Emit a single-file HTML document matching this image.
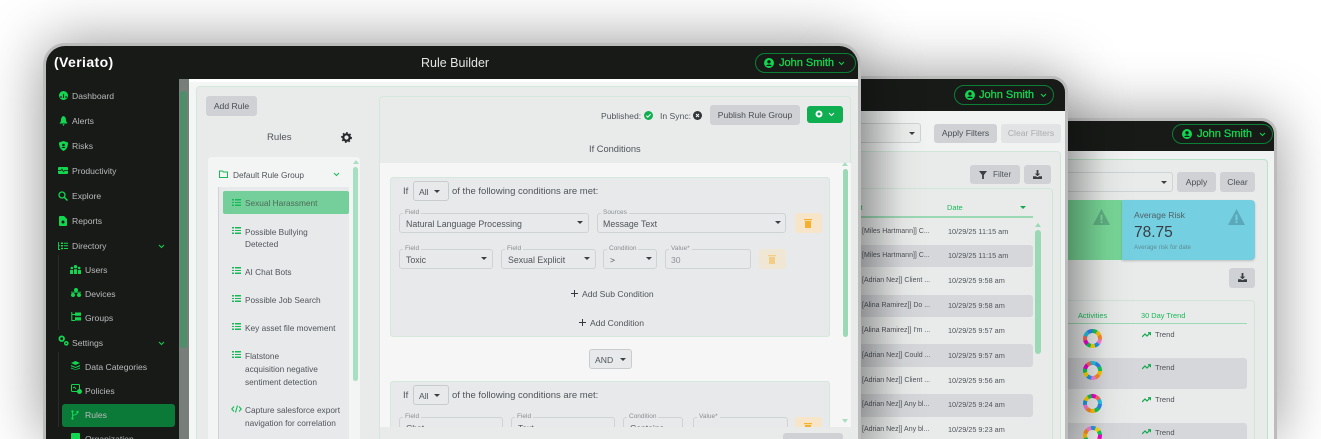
<!DOCTYPE html>
<html><head><meta charset="utf-8"><style>
html,body{margin:0;padding:0;background:#fff;overflow:hidden}
#s{position:relative;width:1321px;height:439px;overflow:hidden;background:#fff;font-family:"Liberation Sans",sans-serif;color:#50545a}
#s div,#s svg{position:absolute}
.t{white-space:nowrap;font-size:8.6px;line-height:12px}
.rl{font-size:8.3px}
.dev{background:#181a18;border:3px solid #bcbcbc;border-bottom:0;box-shadow:0 0 60px rgba(0,0,0,.42);overflow:hidden;box-sizing:border-box;border-radius:16px 16px 0 0}
.pill{border:1px solid #0b7f36;border-radius:11px;height:20px;box-sizing:border-box}
.js{white-space:nowrap;color:#12d650;font-size:11px;line-height:14px;-webkit-text-stroke:.3px #12d650}
.btn{background:#cfd1d5;border-radius:3px;color:#4a4d53;font-size:8.6px;text-align:center;white-space:nowrap}
.sel{border:1px solid #cfd3d3;border-radius:3px;box-sizing:border-box}
.lab{font-size:6.5px;color:#8a8e92;background:#e8e9ea;padding:0 2px;line-height:7px;white-space:nowrap}
.car{width:0;height:0;border-left:3.5px solid transparent;border-right:3.5px solid transparent;border-top:3.5px solid #3b3e42}
.nav{color:#b9bcbb;font-size:8.6px;white-space:nowrap;line-height:12px}
.li{width:9px;height:7px;background:repeating-linear-gradient(#17b956 0 1.3px,transparent 1.3px 2.85px);-webkit-mask-image:linear-gradient(90deg,#000 2px,transparent 2px 3px,#000 3px)}
.r{background:#d6d7da;border-radius:3px}
.don{width:19px;height:19px;border-radius:50%;background:conic-gradient(#14c95a 0 9%,#ffc107 9% 18%,#ff8a2a 18% 27%,#ff80d8 27% 36%,#1e9bf0 36% 45%,#ffd800 45% 54%,#14c95a 54% 62%,#f000d0 62% 71%,#ff6b5a 71% 80%,#27c4e8 80% 90%,#2f86ef 90% 100%)}
.don::after{content:"";position:absolute;left:4px;top:4px;width:11px;height:11px;border-radius:50%;background:#eceded}
</style></head><body><div id="s">

<!-- back device -->
<div class="dev" style="left:1040px;top:118px;width:237px;height:321px">
 <div style="left:0;top:30px;width:232px;height:288px;background:#f1f2f2"></div>
 <div style="left:0;top:38px;width:225px;height:280px;background:#e9ebea;border:1px solid #b9e3c9;border-bottom:0;border-radius:4px 4px 0 0;box-sizing:border-box"></div>
 <div class="pill" style="left:129px;top:3px;width:101px"></div>
 <div class="js" style="left:154px;top:6px">John Smith</div>
 <svg style="left:139px;top:8px" width="10" height="10" viewBox="0 0 10 10"><circle cx="5" cy="5" r="5" fill="#12d650"/><circle cx="5" cy="3.800" r="1.700" fill="#181a18"/><path d="M2 8c1-2 5-2 6 0" fill="#181a18"/></svg>
 <svg style="left:216px;top:11px" width="7" height="5" viewBox="0 0 7 5"><path d="M1 1l2.500 2.500L6 1" fill="none" stroke="#12d650"/></svg>
 <div class="sel" style="left:0;top:51px;width:130px;height:20px"></div>
 <div class="car" style="left:118px;top:60px"></div>
 <div class="btn" style="left:134px;top:51px;width:39px;height:20px;line-height:20px">Apply</div>
 <div class="btn" style="left:177px;top:51px;width:35px;height:20px;line-height:20px">Clear</div>
 <div style="left:0;top:79px;width:79px;height:60px;background:#78d697"></div>
 <div style="left:79px;top:79px;width:133px;height:60px;background:#74d0e0;border-radius:0 4px 4px 0;box-shadow:0 1px 2px rgba(0,0,0,.2)"></div>
 <svg style="left:49px;top:87px" width="19" height="18" viewBox="0 0 20 19"><path d="M10 1L19 18H1Z" fill="#5fae82"/><path d="M9 7h2v6H9zM9 14h2v2H9z" fill="#78d697"/></svg>
 <svg style="left:184px;top:87px" width="19" height="18" viewBox="0 0 20 19"><path d="M10 1L19 18H1Z" fill="#5aa9bb"/><path d="M9 7h2v6H9zM9 14h2v2H9z" fill="#74d0e0"/></svg>
 <div class="t" style="left:91px;top:88px;font-size:8.6px;color:#4f6068">Average Risk</div>
 <div class="t" style="left:91px;top:102px;font-size:15.500px;line-height:20px;color:#383c44">78.75</div>
 <div class="t" style="left:91px;top:123px;font-size:6.200px;line-height:8px;color:#5f8a96">Average risk for date</div>
 <div class="btn" style="left:186px;top:147px;width:26px;height:20px"></div>
 <svg style="left:195px;top:152px" width="9" height="9" viewBox="0 0 10 10"><path d="M4 0h2v4h2L5 7 2 4h2zM0 7h3l2 1 2-1h3v3H0z" fill="#3b3e42"/></svg>
 <div style="left:0;top:179px;width:212px;height:139px;background:#e9ebea;border:1px solid #d2e3d9;border-bottom:0;border-radius:4px 4px 0 0;box-sizing:border-box"></div>
 <div style="left:0;top:202px;width:204px;height:1px;background:#9bd8b4"></div>
 <div class="t" style="left:35px;top:189px;color:#17b956;font-size:7.400px">Activities</div>
 <div class="t" style="left:98px;top:189px;color:#17b956;font-size:7.400px">30 Day Trend</div>
 <div class="r" style="left:0;top:237px;width:204px;height:31px"></div>
 <div class="r" style="left:0;top:302px;width:204px;height:16px;border-radius:3px 3px 0 0"></div>
 <div class="don" style="left:40px;top:208px"></div>
 <div class="don" style="left:40px;top:240px;transform:rotate(60deg)"></div>
 <div class="don" style="left:40px;top:273px;transform:rotate(130deg)"></div>
 <div style="left:40px;top:305px;width:19px;height:13px;overflow:hidden"><div class="don" style="left:0;top:0;transform:rotate(220deg)"></div></div>
 <svg style="left:99px;top:211px" width="9" height="6" viewBox="0 0 9 6"><path d="M0 5l3-3 2 2 3-3M6 .7h2.500v2.500" fill="none" stroke="#12a84d" stroke-width="1.200"/></svg><div class="t" style="left:112px;top:208px;font-size:7.600px">Trend</div>
 <svg style="left:99px;top:243px" width="9" height="6" viewBox="0 0 9 6"><path d="M0 5l3-3 2 2 3-3M6 .7h2.500v2.500" fill="none" stroke="#12a84d" stroke-width="1.200"/></svg><div class="t" style="left:112px;top:241px;font-size:7.600px">Trend</div>
 <svg style="left:99px;top:276px" width="9" height="6" viewBox="0 0 9 6"><path d="M0 5l3-3 2 2 3-3M6 .7h2.500v2.500" fill="none" stroke="#12a84d" stroke-width="1.200"/></svg><div class="t" style="left:112px;top:273px;font-size:7.600px">Trend</div>
 <svg style="left:99px;top:308px" width="9" height="6" viewBox="0 0 9 6"><path d="M0 5l3-3 2 2 3-3M6 .7h2.500v2.500" fill="none" stroke="#12a84d" stroke-width="1.200"/></svg><div class="t" style="left:112px;top:306px;font-size:7.600px">Trend</div>
 <div style="left:25px;top:30px;width:38px;height:288px;background:linear-gradient(90deg,rgba(0,0,0,.13),rgba(0,0,0,0))"></div>
</div>

<!-- middle device -->
<div class="dev" style="left:840px;top:76px;width:228px;height:363px">
 <div style="left:0;top:32px;width:222px;height:328px;background:#f1f2f2"></div>
 <div class="pill" style="left:111px;top:6px;width:100px"></div>
 <svg style="left:122px;top:11px" width="10" height="10" viewBox="0 0 10 10"><circle cx="5" cy="5" r="5" fill="#12d650"/><circle cx="5" cy="3.800" r="1.700" fill="#181a18"/><path d="M2 8c1-2 5-2 6 0" fill="#181a18"/></svg>
 <div class="js" style="left:136px;top:9px">John Smith</div>
 <svg style="left:197px;top:14px" width="7" height="5" viewBox="0 0 7 5"><path d="M1 1l2.500 2.500L6 1" fill="none" stroke="#12d650"/></svg>
 <div class="sel" style="left:0;top:44px;width:78px;height:20px;background:#eceeed"></div>
 <div class="car" style="left:66px;top:53px;"></div>
 <div class="btn" style="left:91px;top:45px;width:63px;height:19px;line-height:19px">Apply Filters</div>
 <div class="btn" style="left:158px;top:45px;width:60px;height:19px;line-height:19px;background:#e2e3e5;color:#a9abae">Clear Filters</div>
 <div style="left:0;top:72px;width:218px;height:288px;background:#e9ebea;border:1px solid #cfe6d9;border-bottom:0;border-radius:4px 4px 0 0;box-sizing:border-box"></div>
 <div class="btn" style="left:127px;top:86px;width:50px;height:19px"></div>
 <svg style="left:136px;top:92px" width="8" height="8" viewBox="0 0 9 9"><path d="M0 0h9L5.500 4.500V9h-2V4.500Z" fill="#3b3e42"/></svg>
 <div class="t" style="left:150px;top:90px;font-size:8.200px">Filter</div>
 <div class="btn" style="left:181px;top:86px;width:27px;height:19px"></div>
 <svg style="left:190px;top:91px" width="9" height="9" viewBox="0 0 10 10"><path d="M4 0h2v4h2L5 7 2 4h2zM0 7h3l2 1 2-1h3v3H0z" fill="#3b3e42"/></svg>
 <div style="left:0;top:109px;width:210px;height:251px;background:#e9ebea;border:1px solid #cfe6d9;border-bottom:0;border-radius:4px 4px 0 0;box-sizing:border-box"></div>
 <div class="t" style="left:6px;top:123px;color:#17b956;font-size:7.400px">Text</div>
 <div class="t" style="left:104px;top:123px;color:#17b956;font-size:7.400px">Date</div>
 <div style="left:177px;top:127px;width:0;height:0;border-left:3px solid transparent;border-right:3px solid transparent;border-top:3px solid #12a84d"></div>
 <div style="left:0;top:137px;width:190px;height:2px;background:#9bd8b4"></div>
 <div style="left:192px;top:151px;width:6px;height:124px;background:#9bd8b4;border-radius:3px"></div>
 <div style="left:192px;top:144px;width:0;height:0;border-left:3px solid transparent;border-right:3px solid transparent;border-bottom:4px solid #9bd8b4"></div>
 <div class="r" style="left:0;top:166px;width:190px;height:22px"></div>
 <div class="r" style="left:0;top:216px;width:190px;height:22px"></div>
 <div class="r" style="left:0;top:265px;width:190px;height:23px"></div>
 <div class="r" style="left:0;top:315px;width:190px;height:23px"></div>
 <div class="t" style="left:19px;top:147px;font-size:7px">[Miles Hartmann]] C...</div><div class="t" style="left:105px;top:147px;font-size:7.300px">10/29/25 11:15 am</div>
 <div class="t" style="left:19px;top:171px;font-size:7px">[Miles Hartmann]] C...</div><div class="t" style="left:105px;top:171px;font-size:7.300px">10/29/25 11:15 am</div>
 <div class="t" style="left:19px;top:196px;font-size:7px">[Adrian Nez]] Client ...</div><div class="t" style="left:105px;top:196px;font-size:7.300px">10/29/25 9:58 am</div>
 <div class="t" style="left:19px;top:221px;font-size:7px">[Alina Ramirez]] Do ...</div><div class="t" style="left:105px;top:221px;font-size:7.300px">10/29/25 9:58 am</div>
 <div class="t" style="left:19px;top:246px;font-size:7px">[Alina Ramirez]] I'm ...</div><div class="t" style="left:105px;top:246px;font-size:7.300px">10/29/25 9:57 am</div>
 <div class="t" style="left:19px;top:271px;font-size:7px">[Adrian Nez]] Could ...</div><div class="t" style="left:105px;top:271px;font-size:7.300px">10/29/25 9:57 am</div>
 <div class="t" style="left:19px;top:296px;font-size:7px">[Adrian Nez]] Client ...</div><div class="t" style="left:105px;top:296px;font-size:7.300px">10/29/25 9:56 am</div>
 <div class="t" style="left:19px;top:320px;font-size:7px">[Adrian Nez]] Any bl...</div><div class="t" style="left:105px;top:320px;font-size:7.300px">10/29/25 9:24 am</div>
 <div class="t" style="left:19px;top:345px;font-size:7px">[Adrian Nez]] Any bl...</div><div class="t" style="left:105px;top:345px;font-size:7.300px">10/29/25 9:23 am</div>
 <div style="left:18px;top:32px;width:42px;height:328px;background:linear-gradient(90deg,rgba(0,0,0,.15),rgba(0,0,0,0))"></div>
</div>

<!-- front device -->
<div class="dev" style="left:43px;top:43px;width:818px;height:396px;border-radius:22px 22px 0 0">
 <div class="t" style="left:8px;top:7px;color:#fff;font-size:14px;line-height:18px;font-weight:bold;letter-spacing:.4px">(Veriato)</div>
 <div class="t" style="left:375px;top:10px;color:#e4e6e5;font-size:12.500px;line-height:15px">Rule Builder</div>
 <div class="pill" style="left:709px;top:7px;width:101px"></div>
 <svg style="left:718px;top:12px" width="10" height="10" viewBox="0 0 10 10"><circle cx="5" cy="5" r="5" fill="#12d650"/><circle cx="5" cy="3.800" r="1.700" fill="#181a18"/><path d="M2 8c1-2 5-2 6 0" fill="#181a18"/></svg>
 <div class="js" style="left:733px;top:10px">John Smith</div>
 <svg style="left:792px;top:15px" width="7" height="5" viewBox="0 0 7 5"><path d="M1 1l2.500 2.500L6 1" fill="none" stroke="#12d650"/></svg>

 <!-- sidebar nav -->
 <svg style="left:13px;top:45px" width="9" height="9" viewBox="0 0 9 9"><circle cx="4.500" cy="4.500" r="4.500" fill="#12d650"/><path d="M2 7V5M4.500 7V3M7 7V5" stroke="#181a18" stroke-width="1.100"/></svg><div class="nav" style="left:26px;top:44px">Dashboard</div>
 <svg style="left:13px;top:70px" width="9" height="10" viewBox="0 0 9 10"><path d="M4.500 0C2 1 2 3 2 5L.5 7.500h8L7 5C7 3 7 1 4.500 0zM3.300 8.300h2.400L4.500 10z" fill="#12d650"/></svg><div class="nav" style="left:26px;top:69px">Alerts</div>
 <svg style="left:13px;top:95px" width="9" height="10" viewBox="0 0 9 10"><path d="M4.500 0L9 1.500C9 6 7.500 8.500 4.500 10 1.500 8.500 0 6 0 1.500Z" fill="#12d650"/><circle cx="4.500" cy="4" r="1.300" fill="#181a18"/><path d="M2.500 7c.7-1.300 3.300-1.300 4 0" fill="#181a18"/></svg><div class="nav" style="left:26px;top:94px">Risks</div>
 <svg style="left:12px;top:121px" width="10" height="7" viewBox="0 0 10 7"><rect width="10" height="7" rx="1" fill="#12d650"/><path d="M0 3.500h3l1-1.300 1.500 2.500 1-1.200H10" fill="none" stroke="#181a18" stroke-width=".8"/></svg><div class="nav" style="left:26px;top:119px">Productivity</div>
 <svg style="left:12px;top:145px" width="10" height="10" viewBox="0 0 10 10"><circle cx="4" cy="4" r="3" fill="none" stroke="#12d650" stroke-width="1.300"/><path d="M6 6l3.500 3.500" stroke="#12d650" stroke-width="1.500"/></svg><div class="nav" style="left:26px;top:144px">Explore</div>
 <svg style="left:13px;top:170px" width="8" height="10" viewBox="0 0 8 10"><path d="M0 1a1 1 0 011-1h4l3 3v6a1 1 0 01-1 1H1a1 1 0 01-1-1z" fill="#12d650"/><circle cx="4" cy="6" r="1.500" fill="#181a18"/></svg><div class="nav" style="left:26px;top:169px">Reports</div>
 <svg style="left:12px;top:196px" width="10" height="8" viewBox="0 0 10 8"><path d="M.5 0v7.500H2M.5 3.700H2" fill="none" stroke="#12d650" stroke-width=".9"/><path d="M3 .5h2v1.500H3zM6 .8h4v1H6zM3 3h2v1.500H3zM6 3.300h4v1H6zM3 5.800h2v1.500H3zM6 6h4v1H6z" fill="#12d650"/></svg><div class="nav" style="left:26px;top:194px">Directory</div>
 <svg style="left:112px;top:198px" width="7" height="5" viewBox="0 0 7 5"><path d="M1 1l2.500 2.500L6 1" fill="none" stroke="#12d650"/></svg>
 <div style="left:12px;top:209px;width:1px;height:75px;background:#2a2c2a"></div>
 <svg style="left:24px;top:219px" width="11" height="9" viewBox="0 0 11 9"><circle cx="5.500" cy="1.700" r="1.700" fill="#12d650"/><circle cx="1.800" cy="3" r="1.300" fill="#12d650"/><circle cx="9.200" cy="3" r="1.300" fill="#12d650"/><path d="M0 5h3v4H0zM4 4.200h3V9H4zM8 5h3v4H8z" fill="#12d650"/></svg><div class="nav" style="left:39px;top:218px">Users</div>
 <svg style="left:25px;top:242px" width="10" height="9" viewBox="0 0 10 9"><circle cx="5" cy="2" r="2" fill="#12d650"/><circle cx="2" cy="7" r="2" fill="#12d650"/><circle cx="8" cy="7" r="2" fill="#12d650"/><path d="M0 4.200h10" stroke="#12d650" stroke-width=".9"/></svg><div class="nav" style="left:39px;top:242px">Devices</div>
 <svg style="left:25px;top:266px" width="10" height="9" viewBox="0 0 10 9"><path d="M.8 0v8.500H4M.8 2.500H4" fill="none" stroke="#12d650" stroke-width="1"/><path d="M4 .500h6v3.200H4zM4 5.200h6v3.300H4z" fill="#12d650"/></svg><div class="nav" style="left:39px;top:266px">Groups</div>
 <svg style="left:12px;top:289px" width="11" height="11" viewBox="0 0 11 11"><circle cx="3.700" cy="3.700" r="2.300" fill="none" stroke="#12d650" stroke-width="1.800"/><circle cx="8.300" cy="8.300" r="1.600" fill="none" stroke="#12d650" stroke-width="1.500"/></svg><div class="nav" style="left:26px;top:291px">Settings</div>
 <svg style="left:112px;top:295px" width="7" height="5" viewBox="0 0 7 5"><path d="M1 1l2.500 2.500L6 1" fill="none" stroke="#12d650"/></svg>
 <div style="left:12px;top:306px;width:1px;height:75px;background:#2a2c2a"></div>
 <svg style="left:25px;top:315px" width="9" height="9" viewBox="0 0 9 9"><path d="M4.500 0L9 2 4.500 4 0 2zM0 4l4.500 2L9 4v1.200L4.500 7 0 5.200zM0 6.500l4.500 2 4.500-2v1L4.500 9 0 7.500z" fill="#12d650"/></svg><div class="nav" style="left:39px;top:315px">Data Categories</div>
 <svg style="left:25px;top:338px" width="11" height="10" viewBox="0 0 11 10"><rect x=".5" y=".5" width="8" height="7" rx="1" fill="none" stroke="#12d650"/><path d="M2 4l1.500-1 1.500 2" fill="none" stroke="#12d650" stroke-width=".9"/><circle cx="8.500" cy="7.500" r="2.500" fill="#12d650"/></svg><div class="nav" style="left:39px;top:339px">Policies</div>
 <div style="left:16px;top:358px;width:113px;height:23px;background:#0b7a39;border-radius:3px"></div>
 <svg style="left:25px;top:364px" width="8" height="10" viewBox="0 0 8 10"><path d="M1.500 1.500v7M1.500 6.500c0-2.500 5-1 5-4" fill="none" stroke="#12d650" stroke-width="1"/><circle cx="1.500" cy="1.500" r="1.200" fill="#12d650"/><circle cx="1.500" cy="8.500" r="1.200" fill="#12d650"/><circle cx="6.500" cy="2" r="1.200" fill="#12d650"/></svg><div class="nav" style="left:39px;top:363px">Rules</div>
 <div style="left:25px;top:387px;width:9px;height:6px;background:#12d650;border-radius:1px 1px 0 0"></div><div class="nav" style="left:39px;top:387px;height:6px;overflow:hidden">Organization</div>

 <!-- sidebar scrollbar strip -->
 <div style="left:133px;top:33px;width:10px;height:360px;background:#787e7a"></div>
 <div style="left:134px;top:45px;width:7px;height:257px;background:#4d8f68;border-radius:3px"></div>

 <!-- content -->
 <div style="left:143px;top:33px;width:672px;height:360px;background:#f4f5f5"></div>
 <div style="left:143px;top:33px;width:672px;height:3px;background:#fff"></div>
 <div style="left:150px;top:40px;width:665px;height:353px;background:#e9ebeb;border:1px solid #d3e8dc;border-bottom:0;border-radius:4px 4px 0 0;box-sizing:border-box"></div>
 <div class="btn" style="left:160px;top:50px;width:51px;height:20px;line-height:20px">Add Rule</div>
 <div class="t" style="left:221px;top:86px;font-size:9.600px">Rules</div>
 <svg style="left:295px;top:86px" width="11" height="11" viewBox="0 0 11 11"><circle cx="5.500" cy="5.500" r="3.200" fill="none" stroke="#25272a" stroke-width="2.200"/><circle cx="5.500" cy="5.500" r="4.700" fill="none" stroke="#25272a" stroke-width="1.400" stroke-dasharray="1.700 1.900"/></svg>

 <!-- rule list -->
 <div style="left:162px;top:111px;width:152px;height:282px;background:#f3f4f4;border-radius:3px 3px 0 0"></div>
 <svg style="left:173px;top:124px" width="9" height="8" viewBox="0 0 9 8"><path d="M.5 1h3l1 1h4v5.500h-8z" fill="none" stroke="#17b956"/></svg>
 <div class="t rl" style="left:187px;top:123px">Default Rule Group</div>
 <svg style="left:287px;top:126px" width="7" height="5" viewBox="0 0 7 5"><path d="M1 1l2.500 2.500L6 1" fill="none" stroke="#17b956"/></svg>
 <div style="left:172px;top:141px;width:131px;height:252px;background:#e8e9eb;border-left:1px solid #cfd2d3;box-sizing:border-box"></div>
 <div style="left:177px;top:145px;width:126px;height:23px;background:#75cf9b;border-radius:2px"></div>
 <div class="li" style="left:186px;top:153px"></div><div class="t rl" style="left:199px;top:151px;color:#4c6a58">Sexual Harassment</div>
 <div class="li" style="left:186px;top:181px"></div><div class="t rl" style="left:199px;top:180px">Possible Bullying</div><div class="t rl" style="left:199px;top:192px">Detected</div>
 <div class="li" style="left:186px;top:221px"></div><div class="t rl" style="left:199px;top:220px">AI Chat Bots</div>
 <div class="li" style="left:186px;top:249px"></div><div class="t rl" style="left:199px;top:248px">Possible Job Search</div>
 <div class="li" style="left:186px;top:277px"></div><div class="t rl" style="left:199px;top:276px">Key asset file movement</div>
 <div class="li" style="left:186px;top:305px"></div><div class="t rl" style="left:199px;top:304px">Flatstone</div><div class="t rl" style="left:199px;top:317px">acquisition negative</div><div class="t rl" style="left:199px;top:330px">sentiment detection</div>
 <svg style="left:185px;top:359px" width="11" height="8" viewBox="0 0 11 8"><path d="M3 1.500L.8 4 3 6.500M8 1.500L10.200 4 8 6.500M6.500.5L4.500 7.500" fill="none" stroke="#17b956" stroke-width="1.100"/></svg><div class="t rl" style="left:199px;top:358px">Capture salesforce export</div><div class="t rl" style="left:199px;top:371px">navigation for correlation</div>
 <div style="left:307px;top:121px;width:5px;height:214px;background:#a8dfc0;border-radius:3px"></div>
 <div style="left:307px;top:114px;width:0;height:0;border-left:3px solid transparent;border-right:3px solid transparent;border-bottom:4px solid #a8dfc0"></div>

 <!-- right panel -->
 <div style="left:333px;top:50px;width:472px;height:343px;background:#e9ebeb;border:1px solid #d3e8dc;border-bottom:0;border-radius:4px 4px 0 0;box-sizing:border-box"></div>
 <div class="t" style="left:555px;top:64px">Published:</div>
 <svg style="left:598px;top:65px" width="9" height="9" viewBox="0 0 9 9"><circle cx="4.500" cy="4.500" r="4.500" fill="#0fae50"/><path d="M2.300 4.600l1.500 1.500 2.900-3" fill="none" stroke="#fff"/></svg>
 <div class="t" style="left:614px;top:64px">In Sync:</div>
 <svg style="left:647px;top:65px" width="9" height="9" viewBox="0 0 9 9"><circle cx="4.500" cy="4.500" r="4.500" fill="#33363a"/><path d="M3 3l3 3M6 3l-3 3" stroke="#fff"/></svg>
 <div class="btn" style="left:664px;top:59px;width:90px;height:20px;line-height:21px">Publish Rule Group</div>
 <div style="left:761px;top:60px;width:36px;height:17px;background:#0fae50;border-radius:3px"></div>
 <svg style="left:769px;top:64px" width="8" height="8" viewBox="0 0 8 8"><circle cx="4" cy="4" r="2.500" fill="none" stroke="#fff" stroke-width="2"/></svg>
 <svg style="left:782px;top:66px" width="7" height="5" viewBox="0 0 7 5"><path d="M1 1l2.500 2.500L6 1" fill="none" stroke="#fff"/></svg>
 <div class="t" style="left:543px;top:97px;font-size:9.300px">If Conditions</div>

 <!-- scroll area -->
 <div style="left:334px;top:117px;width:471px;height:264px;background:#f5f6f5"></div>
 <div style="left:344px;top:131px;width:440px;height:160px;background:#e8e9ea;border:1px solid #d4e8dc;border-radius:3px;box-sizing:border-box"></div>
 <div class="t" style="left:357px;top:140px;font-size:9.500px">If</div>
 <div class="sel" style="left:367px;top:135px;width:36px;height:20px;border-color:#c9cccc"></div>
 <div class="t" style="left:373px;top:140px;font-size:8.600px">All</div><div class="car" style="left:388px;top:144px"></div>
 <div class="t" style="left:406px;top:140px;font-size:9.500px">of the following conditions are met:</div>

 <div class="sel" style="left:353px;top:167px;width:190px;height:20px"></div><div class="lab" style="left:357px;top:163px">Field</div>
 <div class="t" style="left:360px;top:172px;font-size:8.800px">Natural Language Processing</div><div class="car" style="left:531px;top:175px"></div>
 <div class="sel" style="left:551px;top:167px;width:189px;height:20px"></div><div class="lab" style="left:555px;top:163px">Sources</div>
 <div class="t" style="left:557px;top:172px;font-size:8.800px">Message Text</div><div class="car" style="left:729px;top:175px"></div>
 <div style="left:749px;top:167px;width:27px;height:20px;background:#f6e5c8;border-radius:3px"></div>
 <svg style="left:758px;top:172px" width="8" height="10" viewBox="0 0 8 10"><path d="M0 1h8v1.200H0zM1 3h6v7H1z" fill="#f5b12e"/></svg>

 <div class="sel" style="left:353px;top:203px;width:94px;height:20px"></div><div class="lab" style="left:357px;top:199px">Field</div>
 <div class="t" style="left:360px;top:208px;font-size:8.800px">Toxic</div><div class="car" style="left:435px;top:211px"></div>
 <div class="sel" style="left:455px;top:203px;width:95px;height:20px"></div><div class="lab" style="left:459px;top:199px">Field</div>
 <div class="t" style="left:462px;top:208px;font-size:8.800px">Sexual Explicit</div><div class="car" style="left:538px;top:211px"></div>
 <div class="sel" style="left:557px;top:203px;width:54px;height:20px"></div><div class="lab" style="left:561px;top:199px">Condition</div>
 <div class="t" style="left:564px;top:208px">&gt;</div><div class="car" style="left:600px;top:211px"></div>
 <div class="sel" style="left:619px;top:203px;width:86px;height:20px"></div><div class="lab" style="left:623px;top:199px">Value*</div>
 <div class="t" style="left:625px;top:208px;color:#8d9094">30</div>
 <div style="left:713px;top:203px;width:27px;height:20px;background:#f0e6d4;border-radius:3px"></div>
 <svg style="left:722px;top:208px" width="8" height="10" viewBox="0 0 8 10"><path d="M0 1h8v1.200H0zM1 3h6v7H1z" fill="#f3cc85"/></svg>

 <svg style="left:524px;top:243px" width="9" height="9" viewBox="0 0 9 9"><path d="M4.500 1v7M1 4.500h7" stroke="#35383c" stroke-width="1"/></svg><div class="t" style="left:536px;top:242px">Add Sub Condition</div>
 <svg style="left:532px;top:272px" width="9" height="9" viewBox="0 0 9 9"><path d="M4.500 1v7M1 4.500h7" stroke="#35383c" stroke-width="1"/></svg><div class="t" style="left:544px;top:271px">Add Condition</div>

 <div class="sel" style="left:543px;top:303px;width:43px;height:20px;background:#e8e9ea;border-color:#c9cccc"></div>
 <div class="t" style="left:549px;top:308px;font-size:8.600px">AND</div><div class="car" style="left:574px;top:312px"></div>

 <div style="left:344px;top:335px;width:440px;height:58px;background:#e8e9ea;border:1px solid #d4e8dc;border-bottom:0;border-radius:3px 3px 0 0;box-sizing:border-box"></div>
 <div class="t" style="left:357px;top:344px;font-size:9.500px">If</div>
 <div class="sel" style="left:367px;top:339px;width:36px;height:20px;border-color:#c9cccc"></div>
 <div class="t" style="left:373px;top:344px;font-size:8.600px">All</div><div class="car" style="left:388px;top:348px"></div>
 <div class="t" style="left:406px;top:344px;font-size:9.500px">of the following conditions are met:</div>
 <div class="sel" style="left:353px;top:371px;width:104px;height:20px"></div><div class="lab" style="left:357px;top:367px">Field</div><div class="t" style="left:360px;top:376px">Chat</div>
 <div class="sel" style="left:465px;top:371px;width:104px;height:20px"></div><div class="lab" style="left:469px;top:367px">Field</div><div class="t" style="left:472px;top:376px">Text</div>
 <div class="sel" style="left:577px;top:371px;width:60px;height:20px"></div><div class="lab" style="left:581px;top:367px">Condition</div><div class="t" style="left:584px;top:376px">Contains</div>
 <div class="sel" style="left:647px;top:371px;width:95px;height:20px"></div><div class="lab" style="left:651px;top:367px">Value*</div>
 <div style="left:749px;top:371px;width:27px;height:20px;background:#f6e5c8;border-radius:3px"></div>
 <svg style="left:758px;top:376px" width="8" height="10" viewBox="0 0 8 10"><path d="M0 1h8v1.200H0zM1 3h6v7H1z" fill="#f5b12e"/></svg>
 <div style="left:797px;top:123px;width:5px;height:168px;background:#9bd8b4;border-radius:3px"></div>
 <div style="left:796px;top:116px;width:0;height:0;border-left:3px solid transparent;border-right:3px solid transparent;border-bottom:4px solid #a8dfc0"></div>
 <div style="left:796px;top:373px;width:0;height:0;border-left:3px solid transparent;border-right:3px solid transparent;border-top:4px solid #a8dfc0"></div>
 <div style="left:334px;top:381px;width:471px;height:12px;background:#e9ebea"></div>
 <div class="btn" style="left:737px;top:387px;width:60px;height:6px;border-radius:3px 3px 0 0"></div>
</div>
</div></body></html>
